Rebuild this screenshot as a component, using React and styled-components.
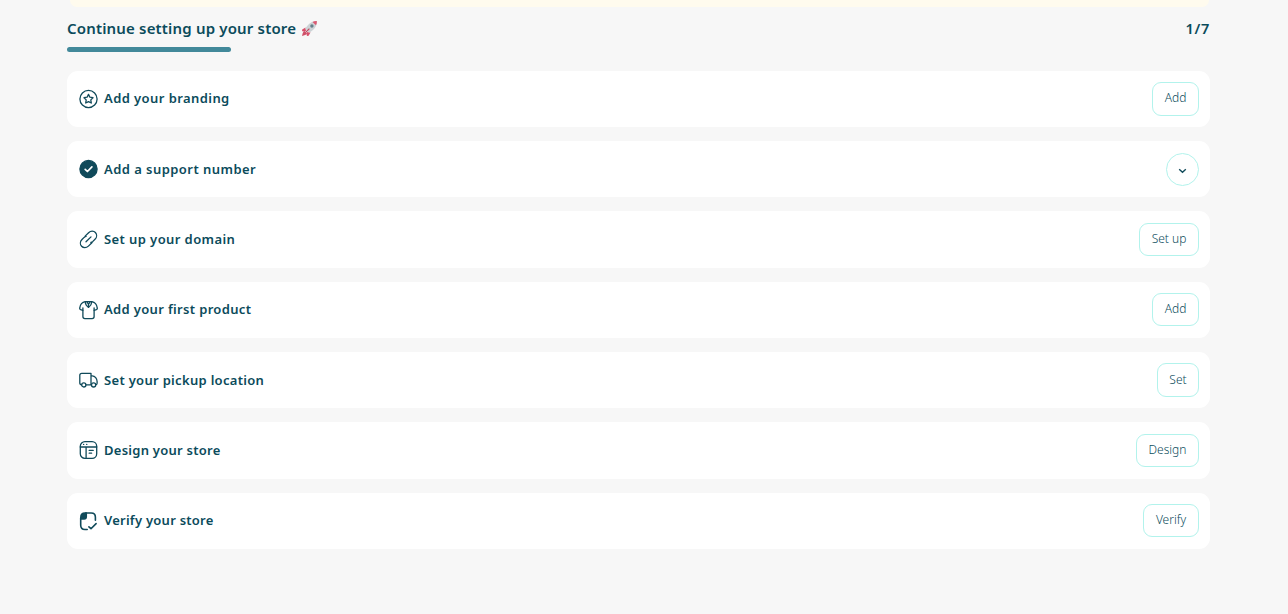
import React from 'react';
import styled, { createGlobalStyle } from 'styled-components';

const GlobalStyle = createGlobalStyle`
  * {
    box-sizing: border-box;
  }

  body {
    margin: 0;
    background: #f7f7f7;
    color: #0b4b5b;
    font-family: 'Noto Sans', 'Open Sans', sans-serif;
  }
`;

const Page = styled.main`
  width: 1143px;
  height: 614px;
  margin-left: 67px;
  overflow: hidden;
`;

const Banner = styled.div`
  height: 7px;
  margin: 0 1px 0 3px;
  background: #fffbee;
  border-radius: 0 0 8px 8px;
`;

const Header = styled.header`
  display: flex;
  justify-content: space-between;
  align-items: center;
  height: 40px;
  padding-top: 1px;
`;

const Title = styled.h1`
  display: flex;
  align-items: center;
  gap: 5px;
  margin: 0;
  font-size: 15px;
  font-weight: 600;
  line-height: 20px;
  white-space: nowrap;
  letter-spacing: 0.17px;

  svg {
    position: relative;
    top: 1px;
  }
`;

const Counter = styled.span`
  font-size: 14.5px;
  font-weight: 600;
  line-height: 20px;
  letter-spacing: 0.7px;
`;

const Progress = styled.div`
  width: 164px;
  height: 5px;
  border-radius: 3px;
  background: #42899a;
`;

const StepList = styled.ul`
  display: flex;
  flex-direction: column;
  gap: 14px;
  margin: 18.6px 0 0;
  padding: 0;
  list-style: none;
`;

const StepCard = styled.li`
  display: flex;
  align-items: center;
  height: 56.33px;
  padding: 0 11px 0 12px;
  border-radius: 11px;
  background: #ffffff;
`;

const StepIcon = styled.svg`
  flex: none;
  width: 19px;
  height: 20px;
  fill: none;
  stroke: #104a5a;
  stroke-width: 1.3;
  stroke-linecap: round;
  stroke-linejoin: round;
`;

const StepLabel = styled.span`
  flex: 1;
  margin: -1px 0 0 6px;
  font-size: 13px;
  font-weight: 600;
  line-height: 20px;
  white-space: nowrap;
  letter-spacing: ${props => props.$tracking || 0}px;
`;

const ActionButton = styled.button`
  width: ${props => props.$width}px;
  height: 33.5px;
  padding: 0 0 1px;
  border: 1px solid #b2f3ec;
  border-radius: 9px;
  background: #ffffff;
  color: #0b4b5b;
  font-family: inherit;
  font-size: 12px;
  font-weight: 350;
  line-height: 16px;
`;

const ToggleButton = styled.button`
  display: flex;
  align-items: center;
  justify-content: center;
  width: 33px;
  height: 33px;
  padding: 3px 0 0;
  border: 1px solid #b2f3ec;
  border-radius: 50%;
  background: #ffffff;
`;

const RocketIcon = () => (
  <svg width="17" height="17" viewBox="0 0 17 17">
    <path d="M4.5 7.5L1.2 9.4 1 11.2 5 11ZM9.5 12.5L7.6 15.8 5.8 16 6 12Z" fill="#d9506b" />
    <path d="M3 10.5L6.5 14 3.4 15.2 1 16 1.7 13.2Z" fill="#cf5068" />
    <path d="M15.8 1C11.5.9 7.2 3.5 4.2 8.8L8.1 12.8C13.5 9.8 16.2 5.5 15.8 1Z" fill="#ccd2d5" />
    <path d="M11.5 2C13 1.2 14.3 .9 15.8 1 16 2.5 15.7 3.9 15 5.3Z" fill="#dc5871" />
    <circle cx="10.9" cy="6" r="1.7" fill="#65808b" />
    <path d="M8.4 8.6L4.5 12.5" stroke="#b84b60" strokeWidth="1.1" />
  </svg>
);

const icons = {
  branding: (
    <>
      <circle cx="9.5" cy="10" r="8.6" />
      <path d="M9.5 5.4L10.9 8.2 14 8.7 11.8 10.9 12.3 14 9.5 12.6 6.7 14 7.2 10.9 5 8.7 8.1 8.2Z" />
    </>
  ),
  support: (
    <>
      <circle cx="9.5" cy="10" r="8.6" fill="#104a5a" />
      <path d="M6.2 10.3L8.4 12.5 12.9 7.8" stroke="#ffffff" strokeWidth="1.7" />
    </>
  ),
  domain: (
    <>
      <path d="M6.1 7.1L9.6 3.7C11.8 1.6 14.8 1.8 16.4 3.5S18.1 8.2 16 10.3L13.9 12.4Q13 13.2 11.9 13.5" />
      <path d="M12.9 13.7L9.4 17.1C7.2 19.2 4.2 19 2.6 17.3S.9 12.6 3 10.5L5.1 8.4Q6 7.6 7.1 7.3" />
      <path d="M7 12.8L12 7.9" />
    </>
  ),
  product: (
    <>
      <path d="M6.2 1.7C3.2 2.2 1.2 4.5.7 8.2Q.6 9.2 1.6 9.6L3.9 10.3V16.6Q3.9 18.6 5.9 18.6H13.1Q15.1 18.6 15.1 16.6V10.3L17.4 9.6Q18.4 9.2 18.3 8.2C17.8 4.5 15.8 2.2 12.8 1.7Z" />
      <path d="M6.2 1.7Q6.4 5.1 9.5 7.4 12.6 5.1 12.8 1.7M8 1.9L9.5 4.4 11 1.9M9.5 4.4V7.4M3.9 7.8V10.3M15.1 7.8V10.3" />
    </>
  ),
  pickup: (
    <>
      <path d="M2.6 14.8Q.8 14.8.8 13V5.3Q.8 3.3 2.8 3.3H12V14.8H7M12 5.8H13.2C16 5.8 18.1 8.6 18.1 11.5V13.3Q18.1 14.8 16.8 14.8" />
      <circle cx="4.8" cy="14.9" r="2.1" />
      <circle cx="14.6" cy="14.9" r="2.1" />
    </>
  ),
  design: (
    <>
      <rect x="1.3" y="1.7" width="16.4" height="16.6" rx="4.6" />
      <path d="M1.3 7H17.7M7.1 7V18.3M10.2 10.4H14.2M10.2 13.2H12.6M4.6 4.4H4.7M7.7 4.4H7.8" />
    </>
  ),
  verify: (
    <>
      <path d="M6.7 2H12.2Q16.4 2 16.4 6.2V9.3M8.2 18.5H5.9Q1.7 18.5 1.7 14.3V7.1" strokeWidth="1.6" />
      <path d="M1.7 8V6.2Q1.7 2 5.9 2H7.4V5.8Q7.4 8 5.2 8Z" fill="#104a5a" />
      <path d="M9.9 15.8L12 17.7 17.1 12.6" strokeWidth="1.6" />
    </>
  )
};

const steps = [
  { id: 'branding', label: 'Add your branding', action: 'Add', width: 47, tracking: 0.42 },
  { id: 'support', label: 'Add a support number', done: true, tracking: 0.45 },
  { id: 'domain', label: 'Set up your domain', action: 'Set up', width: 60, tracking: 0.41 },
  { id: 'product', label: 'Add your first product', action: 'Add', width: 47, tracking: 0.34 },
  { id: 'pickup', label: 'Set your pickup location', action: 'Set', width: 42, tracking: 0.31 },
  { id: 'design', label: 'Design your store', action: 'Design', width: 63, tracking: 0.26 },
  { id: 'verify', label: 'Verify your store', action: 'Verify', width: 56, tracking: 0.25 }
];

const Step = ({ step }) => (
  <StepCard>
    <StepIcon viewBox="0 0 19 20">{icons[step.id]}</StepIcon>
    <StepLabel $tracking={step.tracking}>{step.label}</StepLabel>
    {step.done ? (
      <ToggleButton aria-label="Expand">
        <svg width="9" height="6" viewBox="0 0 9 6" fill="none">
          <path d="M1.2 1.2L4.5 4.2 7.8 1.2" stroke="#104a5a" strokeWidth="1.4" />
        </svg>
      </ToggleButton>
    ) : (
      <ActionButton $width={step.width}>{step.action}</ActionButton>
    )}
  </StepCard>
);

const App = () => {
  const doneCount = steps.filter(step => step.done).length;

  return (
    <>
      <GlobalStyle />
      <Page>
        <Banner />
        <Header>
          <Title>
            Continue setting up your store
            <RocketIcon />
          </Title>
          <Counter>{doneCount}/{steps.length}</Counter>
        </Header>
        <Progress />
        <StepList>
          {steps.map(step => (
            <Step key={step.id} step={step} />
          ))}
        </StepList>
      </Page>
    </>
  );
};

export default App;
